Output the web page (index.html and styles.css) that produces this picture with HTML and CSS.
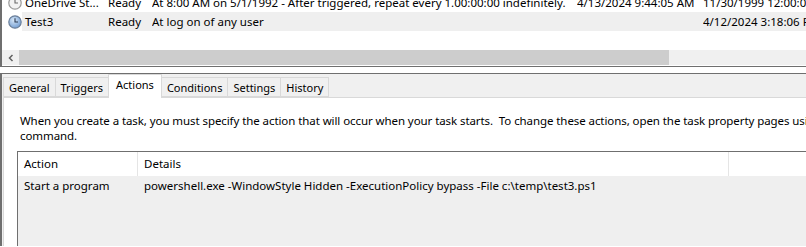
FILE: index.html
```html
<!DOCTYPE html>
<html>
<head>
<meta charset="utf-8">
<link rel="stylesheet" href="styles.css">
</head>
<body>
<div class="tasklist">
  <div class="rows">
    <div class="row">
      <div class="cell icon">
        <svg width="14" height="14" viewBox="0 0 14 14"><circle cx="7" cy="7" r="6.2" fill="#f2f2f2" stroke="#9a9a9a" stroke-width="1.2"/><path d="M7 3.2V7H10" fill="none" stroke="#6a6a6a" stroke-width="1.1"/></svg>
      </div>
      <div class="cell name">OneDrive St...</div>
      <div class="cell">Ready</div>
      <div class="cell">At 8:00 AM on 5/1/1992 - After triggered, repeat every 1.00:00:00 indefinitely.</div>
      <div class="cell">4/13/2024 9:44:05 AM</div>
      <div class="cell">11/30/1999 12:00:00 AM</div>
    </div>
    <div class="row sel">
      <div class="cell icon">
        <svg width="14" height="14" viewBox="0 0 14 14"><defs><radialGradient id="g" cx="0.4" cy="0.35" r="0.7"><stop offset="0" stop-color="#d6e6f7"/><stop offset="1" stop-color="#6f9bd1"/></radialGradient></defs><circle cx="7" cy="7" r="6.2" fill="url(#g)" stroke="#6b7f99" stroke-width="1.2"/><path d="M7 3.2V7H10" fill="none" stroke="#2b3a52" stroke-width="1.1"/></svg>
      </div>
      <div class="cell name">Test3</div>
      <div class="cell">Ready</div>
      <div class="cell">At log on of any user</div>
      <div class="cell"></div>
      <div class="cell">4/12/2024 3:18:06 PM</div>
    </div>
  </div>
  <div class="hscroll">
    <div class="arrow">
      <svg width="8" height="8" viewBox="0 0 8 8"><path d="M5.5 1L2.5 4L5.5 7" fill="none" stroke="#606060" stroke-width="1.5"/></svg>
    </div>
    <div class="thumb"></div>
    <div class="track"></div>
  </div>
</div>
<div class="splitter"></div>
<div class="pane">
  <div class="tabs">
    <div class="tab">General</div>
    <div class="tab">Triggers</div>
    <div class="tab active">Actions</div>
    <div class="tab">Conditions</div>
    <div class="tab">Settings</div>
    <div class="tab">History</div>
  </div>
  <div class="page">
    <p class="intro">When you create a task, you must specify the action that will occur when your task starts.&nbsp; To change these actions, open the task property pages using the Properties<br>command.</p>
    <div class="actions">
      <div class="head">
        <div class="hcell c1">Action</div>
        <div class="hcell c2">Details</div>
        <div class="hcell c3"></div>
      </div>
      <div class="body">
        <div class="arow">
          <div class="acell c1">Start a program</div>
          <div class="acell c2">powershell.exe -WindowStyle Hidden -ExecutionPolicy bypass -File c:\temp\test3.ps1</div>
        </div>
      </div>
    </div>
  </div>
</div>
</body>
</html>
```
FILE: styles.css
```css
html, body {
  margin: 0;
  padding: 0;
  background: #ffffff;
  overflow: hidden;
}
body {
  width: 806px;
  height: 247px;
  font-family: "Segoe UI", "Noto Sans", sans-serif;
  font-size: 11.5px;
  color: #000;
}
.tasklist {
  border-left: 2px solid #6f6f6f;
  border-bottom: 1px solid #6f6f6f;
  height: 67px;
  box-sizing: border-box;
  display: flex;
  flex-direction: column;
  overflow: hidden;
}
.rows {
  margin-top: -7px;
  flex: 1;
}
.row {
  display: grid;
  grid-template-columns: 20px 86px 44px 425px 126px 1fr;
  height: 19px;
  white-space: nowrap;
}
.cell {
  line-height: 20px;
  overflow: hidden;
}
.cell.icon {
  padding-left: 6px;
  padding-top: 3px;
  box-sizing: border-box;
  line-height: 0;
}
.cell.name {
  padding-left: 3px;
}
.row.sel .cell:not(.icon) {
  background: #efefef;
}
.hscroll {
  display: flex;
  height: 15px;
  margin-bottom: 1px;
  background: #f0f0f0;
}
.arrow {
  width: 17px;
  display: flex;
  align-items: center;
  justify-content: center;
}
.thumb {
  width: 650px;
  background: #cdcdcd;
}
.track {
  flex: 1;
}
.splitter {
  height: 6px;
  background: #fff;
}
.pane {
  border-top: 1px solid #6f6f6f;
  border-left: 2px solid #6f6f6f;
  background: #f0f0f0;
  height: 173px;
  box-sizing: border-box;
  display: flex;
  flex-direction: column;
}
.tabs {
  display: flex;
  align-items: flex-end;
  padding-left: 1px;
  height: 23px;
  position: relative;
  z-index: 1;
  font-size: 11px;
}
.tab {
  height: 20px;
  box-sizing: border-box;
  border: 1px solid #d9d9d9;
  border-left: none;
  border-bottom: 1px solid #d9d9d9;
  padding: 0 5px;
  line-height: 20px;
  background: #f0f0f0;
}
.tab:first-child {
  border-left: 1px solid #d9d9d9;
}
.tab.active {
  height: 24px;
  margin-bottom: -1px;
  background: #fff;
  border-bottom: none;
  border-left: 1px solid #d9d9d9;
  padding: 0 7px;
  line-height: 20px;
  margin-left: -1px;
  margin-right: -1px;
  position: relative;
}
.tab.active + .tab {
  border-left: 1px solid #d9d9d9;
}
.page {
  flex: 1;
  background: #fff;
  border-top: 1px solid #d9d9d9;
  border-left: 1px solid #d9d9d9;
  margin-left: 1px;
  padding: 15px 0 0 16px;
  overflow: hidden;
}
.intro {
  margin: 0;
  line-height: 15px;
  white-space: nowrap;
  letter-spacing: -0.08px;
}
.actions {
  margin-top: 8px;
  margin-left: -3px;
  border-top: 1px solid #6f6f6f;
  border-left: 1px solid #6f6f6f;
  height: 100px;
  display: flex;
  flex-direction: column;
}
.head {
  display: flex;
  height: 24px;
  background: #fff;
}
.hcell {
  line-height: 24px;
  padding-left: 6px;
  box-sizing: border-box;
  border-right: 1px solid #e5e5e5;
}
.c1 { width: 120px; }
.c2 { width: 591px; }
.hcell.c3 { flex: 1; border-right: none; }
.body {
  flex: 1;
  background: #efefef;
}
.arow {
  display: flex;
  height: 20px;
}
.acell {
  line-height: 20px;
  padding-left: 6px;
  box-sizing: border-box;
  white-space: nowrap;
}
```
